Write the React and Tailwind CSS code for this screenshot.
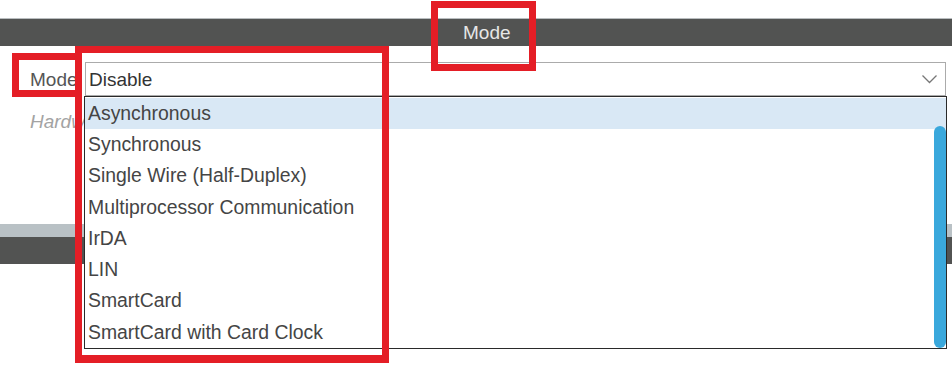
const options = [
  'Asynchronous',
  'Synchronous',
  'Single Wire (Half-Duplex)',
  'Multiprocessor Communication',
  'IrDA',
  'LIN',
  'SmartCard',
  'SmartCard with Card Clock',
];

const ModeDropdown = () => (
  <div className="absolute left-[84px] top-[96px] w-[863px] h-[253px] bg-white border border-[#2a2a2a] flex flex-col pt-px">
    {options.map((opt, i) => (
      <div
        key={opt}
        className={`h-[31.5px] flex items-center pl-[3px] text-[19.4px] text-[#454545] leading-none ${i === 0 ? 'bg-[#d9e8f5]' : ''}`}
      >
        {opt}
      </div>
    ))}
    {/* scrollbar thumb */}
    <div className="absolute right-0 top-[29px] bottom-0 w-[12px] rounded-full bg-[#3aa8dc]" />
  </div>
);

const App = () => {
  return (
    <div className="relative w-[952px] h-[366px] bg-white overflow-hidden font-['Liberation_Sans',Arial,sans-serif]">
      <div className="h-[18px]" />
      <div className="h-px bg-[#b9bdbf]" />
      <div className="h-[27px] bg-[#525352] flex items-center pl-[463px] text-[19px] text-[#e6e6e6] leading-none">
        Mode
      </div>

      <div className="h-[16px]" />
      <div className="flex items-stretch h-[34px] pr-[6px]">
        <div className="w-[85px] pl-[30px] flex items-center text-[19px] text-[#555] leading-none">Mode</div>
        <div className="flex-1 border border-[#ababab] flex items-center justify-between pl-[3px] pr-[8px] text-[19px] text-[#333] leading-none">
          <span>Disable</span>
          <svg width="15" height="9" viewBox="0 0 15 9" fill="none" stroke="#777" strokeWidth="1.3">
            <polyline points="0.5,0.5 7.5,7.5 14.5,0.5" />
          </svg>
        </div>
      </div>

      {/* row partly hidden behind the open dropdown */}
      <div className="h-[50px] pl-[30px] flex items-center">
        <div className="w-[54px] overflow-hidden whitespace-nowrap text-[19px] italic text-[#a3a3a3] leading-none">
          Hardware
        </div>
      </div>

      <div className="h-[78px]" />
      <div className="h-[13px] bg-[#b9c1c5]" />
      <div className="h-[27px] bg-[#525352]" />

      <ModeDropdown />

      {/* annotation boxes */}
      <div className="absolute left-[431px] top-px w-[105px] h-[70px] border-[7px] border-[#e41e26]" />
      <div className="absolute left-[12px] top-[53px] w-[70px] h-[44px] border-[7px] border-[#e41e26]" />
      <div className="absolute left-[75px] top-[46px] w-[314px] h-[317px] border-[7px] border-b-[8px] border-[#e41e26]" />
    </div>
  );
};

export default App;
